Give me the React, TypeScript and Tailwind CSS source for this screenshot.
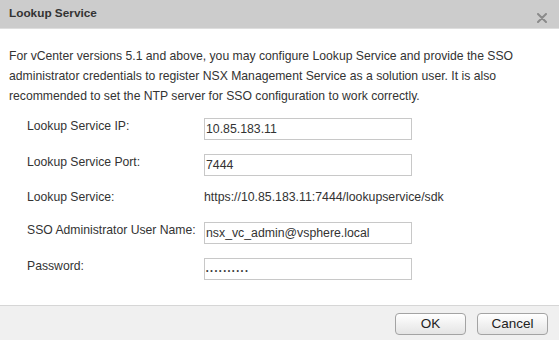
import React from "react";

const font = { fontFamily: '"Liberation Sans", Arial, Helvetica, sans-serif' };

function Label({ children }: { children: React.ReactNode }) {
  return <div className="w-[177px] shrink-0 whitespace-nowrap leading-[16px] text-[12.2px] text-[#333]">{children}</div>;
}

function Field({ value, small }: { value: string; small?: boolean }) {
  return (
    <div className="w-[208px] h-[22px] border border-[#c8c8c8] bg-white flex items-center pl-[1px] text-[12.3px] text-[#333] overflow-hidden whitespace-nowrap">
      {small ? <span className="text-[7px] tracking-[1.9px] leading-none pt-[2px]">••••••••••</span> : value}
    </div>
  );
}

export default function App() {
  return (
    <div className="w-[559px] h-[340px] bg-white flex flex-col overflow-hidden" style={font}>
      <div className="h-[29px] shrink-0 bg-[#cccccc] border-b border-[#dedede] flex items-center justify-between pl-[9px] pr-[12px]">
        <div className="text-[11.8px] font-bold text-[#333]">Lookup Service</div>
        <svg width="10" height="10" viewBox="0 0 10 10" className="mt-[8px]">
          <path d="M1 1 L9 9 M9 1 L1 9" stroke="#8a8a8a" strokeWidth="2" strokeLinecap="round" />
        </svg>
      </div>
      <div className="flex-1 flex flex-col pt-[17px] pl-[9px]">
        <p className="text-[12.2px] leading-[20px] text-[#333] whitespace-nowrap">
          For vCenter versions 5.1 and above, you may configure Lookup Service and provide the SSO
          <br />
          administrator credentials to register NSX Management Service as a solution user. It is also
          <br />
          recommended to set the NTP server for SSO configuration to work correctly.
        </p>
        <div className="pl-[18px] flex flex-col">
          <div className="flex items-start mt-[12px]">
            <Label>Lookup Service IP:</Label>
            <Field value="10.85.183.11" />
          </div>
          <div className="flex items-start mt-[14px]">
            <Label>Lookup Service Port:</Label>
            <Field value="7444" />
          </div>
          <div className="flex items-center mt-[10px] h-[22px]">
            <Label>Lookup Service:</Label>
            <div className="text-[12.3px] leading-[22px] text-[#333]">https://10.85.183.11:7444/lookupservice/sdk</div>
          </div>
          <div className="flex items-start mt-[14px]">
            <Label>SSO Administrator User Name:</Label>
            <Field value="nsx_vc_admin@vsphere.local" />
          </div>
          <div className="flex items-start mt-[14px]">
            <Label>Password:</Label>
            <Field value="" small />
          </div>
        </div>
      </div>
      <div className="h-[35px] shrink-0 bg-[#f0f0f0] border-t border-[#d6d6d6] flex items-start justify-end gap-[11px] pt-[7px] pr-[11px]">
        <button className="w-[71px] h-[22px] rounded-[4px] border border-[#a3a3a3] bg-gradient-to-b from-white to-[#e4e4e4] text-[13.5px] text-[#222]">OK</button>
        <button className="w-[71px] h-[22px] rounded-[4px] border border-[#a3a3a3] bg-gradient-to-b from-white to-[#e4e4e4] text-[13.5px] text-[#222]">Cancel</button>
      </div>
    </div>
  );
}
